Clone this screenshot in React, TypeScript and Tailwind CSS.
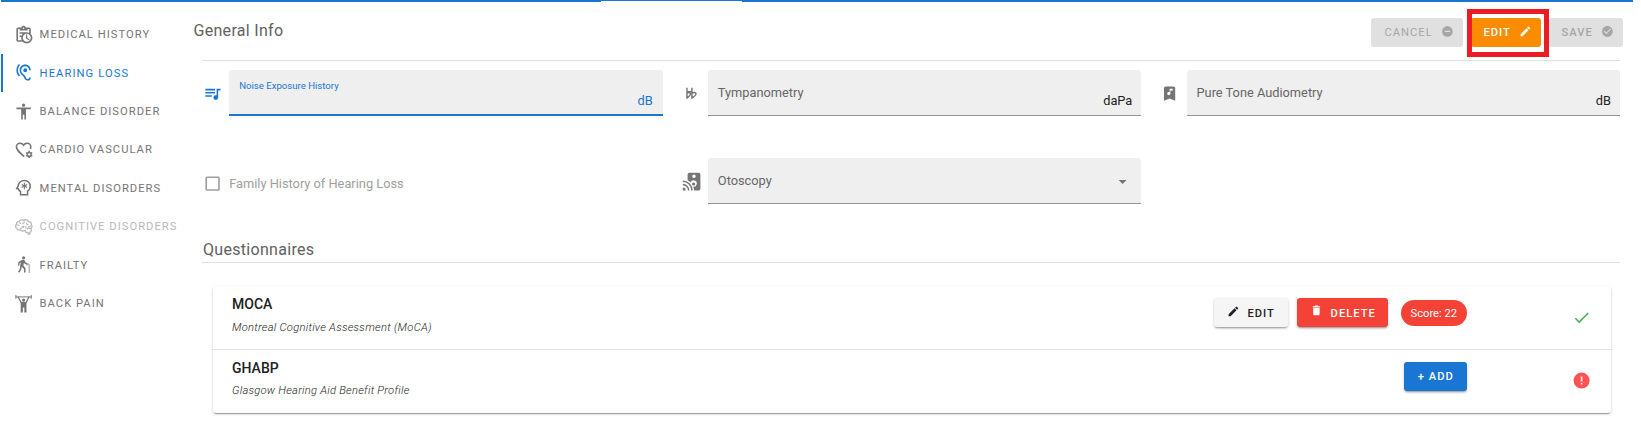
import React from 'react';

const icons = {
  clipboard:
    'M21 11.11V5C21 3.9 20.11 3 19 3H14.82C14.4 1.84 13.3 1 12 1S9.6 1.84 9.18 3H5C3.9 3 3 3.9 3 5V19C3 20.11 3.9 21 5 21H11.11C12.37 22.24 14.09 23 16 23C19.87 23 23 19.87 23 16C23 14.09 22.24 12.37 21 11.11M12 3C12.55 3 13 3.45 13 4S12.55 5 12 5 11 4.55 11 4 11.45 3 12 3M5 19V5H7V7H17V5H19V9.68C18.09 9.25 17.08 9 16 9H7V11H11.1C10.5 11.57 10.04 12.25 9.68 13H7V15H9.08C9.03 15.33 9 15.66 9 16C9 17.08 9.25 18.09 9.68 19H5M16 21C13.24 21 11 18.76 11 16S13.24 11 16 11 21 13.24 21 16 18.76 21 16 21M16.5 16.25L19.36 17.94L18.61 19.16L15 17V12H16.5V16.25Z',
  ear: 'M17,20C16.71,20 16.44,19.94 16.24,19.85C15.53,19.5 15.03,18.97 14.53,17.47C14,15.91 13.06,15.18 12.14,14.47C11.35,13.86 10.53,13.23 9.82,11.94C9.29,11 9,9.93 9,9C9,6.2 11.2,4 14,4C16.8,4 19,6.2 19,9H21C21,5.07 17.93,2 14,2C10.07,2 7,5.07 7,9C7,10.26 7.38,11.65 8.07,12.9C9,14.55 10.05,15.38 10.92,16.05C11.73,16.67 12.31,17.12 12.63,18.1C13.23,19.92 14,20.94 15.36,21.65C15.87,21.88 16.43,22 17,22A4,4 0 0,0 21,18H19A2,2 0 0,1 17,20M7.64,2.64L6.22,1.22C4.23,3.21 3,5.96 3,9C3,12.04 4.23,14.79 6.22,16.78L7.63,15.37C6,13.74 5,11.5 5,9C5,6.5 6,4.26 7.64,2.64M11.5,9A2.5,2.5 0 0,0 14,11.5A2.5,2.5 0 0,0 16.5,9A2.5,2.5 0 0,0 14,6.5A2.5,2.5 0 0,0 11.5,9Z',
  human: 'M12 2c1.1 0 2 .9 2 2s-.9 2-2 2-2-.9-2-2 .9-2 2-2zm9 7h-6v13h-2v-6h-2v6H9V9H3V7h18v2z',
  playlist:
    'M15,6H3V8H15V6M15,10H3V12H15V10M3,16H11V14H3V16M17,6V14.18C16.69,14.07 16.35,14 16,14A3,3 0 0,0 13,17A3,3 0 0,0 16,20A3,3 0 0,0 19,17V8H22V6H17Z',
  bookmark:
    'M17,3A2,2 0 0,1 19,5V21L12,18L5,21V5A2,2 0 0,1 7,3H17M11,14A2,2 0 0,0 13,12V8H16V6H12V10.27C11.71,10.1 11.36,10 11,10A2,2 0 0,0 9,12A2,2 0 0,0 11,14Z',
  pencil:
    'M20.71,7.04C21.1,6.65 21.1,6 20.71,5.63L18.37,3.29C18,2.9 17.35,2.9 16.96,3.29L15.12,5.12L18.87,8.87M3,17.25V21H6.75L17.81,9.93L14.06,6.18L3,17.25Z',
  minusCircle: 'M17,13H7V11H17M12,2A10,10 0 0,0 2,12A10,10 0 0,0 12,22A10,10 0 0,0 22,12A10,10 0 0,0 12,2Z',
  checkCircle:
    'M12 2C6.5 2 2 6.5 2 12S6.5 22 12 22 22 17.5 22 12 17.5 2 12 2M10 17L5 12L6.41 10.59L10 14.17L17.59 6.58L19 8L10 17Z',
  trash: 'M19,4H15.5L14.5,3H9.5L8.5,4H5V6H19M6,19A2,2 0 0,0 8,21H16A2,2 0 0,0 18,19V7H6V19Z',
  check: 'M21,7L9,19L3.5,13.5L4.91,12.09L9,16.17L19.59,5.59L21,7Z',
  alert: 'M13,13H11V7H13M13,17H11V15H13M12,2A10,10 0 0,0 2,12A10,10 0 0,0 12,22A10,10 0 0,0 22,12A10,10 0 0,0 12,2Z',
  menuDown: 'M7,10L12,15L17,10H7Z',
  checkbox: 'M19,3H5C3.89,3 3,3.89 3,5V19A2,2 0 0,0 5,21H19A2,2 0 0,0 21,19V5C21,3.89 20.1,3 19,3M19,5V19H5V5H19Z',
};

function Icon({ d, className = 'size-[19.2px]' }: { d: string; className?: string }) {
  return (
    <svg viewBox="0 0 24 24" fill="currentColor" fillRule="evenodd" className={`shrink-0 ${className}`}>
      <path d={d} />
    </svg>
  );
}

function Drawing({ children, className = 'size-[19.2px]' }: { children: React.ReactNode; className?: string }) {
  return (
    <svg viewBox="0 0 24 24" fill="none" stroke="currentColor" strokeWidth="2" className={`shrink-0 ${className}`}>
      {children}
    </svg>
  );
}

const HeartCog = () => (
  <Drawing>
    <path d="M13 19.7 12 20.1C6 14.7 3 12 3 8.5A4.5 4.5 0 0 1 7.5 4C9.3 4 11.1 4.9 12 6.4C12.9 4.9 14.7 4 16.5 4A4.5 4.5 0 0 1 21 8.5Q21 10 20.4 11.3" />
    <circle cx="19" cy="18" r="2.4" strokeWidth="1.8" />
    <path d="M19 13.6v2M19 20.4v2M15.2 15.8l1.7 1M21.1 19.2l1.7 1M22.8 15.8l-1.7 1M16.9 19.2l-1.7 1" strokeWidth="2" />
  </Drawing>
);

const HeadSnowflake = () => (
  <Drawing>
    <path d="M8.2 21V17.1C6.3 15.8 5.5 14.4 5.2 13.4L3.4 13 5.2 10.2C5.6 6.2 8.8 3 13 3A7.2 7.2 0 0 1 20.3 10C20.3 12.8 18.9 15.1 17 16.4V21H7.3" strokeWidth="1.9" />
    <path d="M13 6v8M9.5 8l7 4M16.5 8l-7 4" strokeWidth="1.4" />
  </Drawing>
);

const Brain = () => (
  <Drawing>
    <path
      d="M20.8 14.8c1.7-.9 2.2-3 1.1-4.8.1-2.4-1.5-4.1-3.7-4.2C16.8 3.4 14.4 3 12.5 4 9.6 3 7.4 3.6 6.3 5.5 4 5.7 3 7.6 3.2 9 1.3 10.4 1.5 13.3 3.6 14.2c.5 1.8 2.2 2.5 4 2.1 1.9 1.5 3.7 1.6 5.7.4M14 16.2c-.5 2 .7 3.4 2.4 3.3h1.2l.4 2h2l-.3-2.5c2.2-.3 2.7-2.8 1.1-4.2-1.7-1.3-3.8-.5-4.7.5"
      strokeWidth="1.6"
    />
    <path
      d="M12.5 4v3.2c0 1-1.2 1.3-2.2 1M7 6.3c0 1.5 1 2 2 1.8M3.3 10.5c1.4-.9 2.9-.5 3.4.7M7.5 16c0-1.8 1.2-2.8 3.3-2.6 1 0 1.5-.6 1.5-1.8M9.8 11.5H13M16 7.5c-.8 1.3.3 2.3 2 2M20.8 10.5c-.2 1.7-1.8 2.3-3.3 1.6M14.5 14.2c.8-1 .7-2 .4-3"
      strokeWidth="1.4"
    />
  </Drawing>
);

const WalkingCane = () => (
  <Drawing>
    <circle cx="12" cy="3.4" r="1.9" fill="currentColor" stroke="none" />
    <path
      d="M10.6 5.8h2.2l1.9 3.7 2.4 1.1-.7 1.5-3-1.3-1-1.2-.6 4 2.6 3V22h-1.9v-4.6l-2.9-2.7-.7 3.6L6.6 22.1 5 21l2.2-3.5L8.4 9.2 7 10.2 6.6 13.4 5 13.1l.5-4.2z"
      fill="currentColor"
      stroke="none"
    />
    <path d="M16.4 13v-.6c0-1.8 2.6-1.8 2.6 0V22.5" strokeWidth="1" />
  </Drawing>
);

const WeightLifter = () => (
  <Drawing>
    <path d="M2 3.6h20M2.4 1.2v4.8M21.6 1.2v4.8" strokeWidth="1.2" />
    <circle cx="12" cy="7.6" r="2" fill="currentColor" stroke="none" />
    <path d="M5 3.4 9 10.8h6l4-7.4" strokeWidth="1.6" />
    <path d="M8.4 10h7.2v13h-2.7v-6h-1.8v6H8.4z" fill="currentColor" stroke="none" />
  </Drawing>
);

const DoubleFlat = () => (
  <Drawing>
    <path
      d="M6.2 4.6v14M12.4 4.6v14M6 11.8c2-1.9 4.8-1.3 4.6.7-.2 1.9-2.4 3.6-4.4 5.1M12.4 11.8c2.4-1.9 5.4-1.3 5.1.7-.3 1.9-2.9 3.6-5.1 5.1M6 9.5h7"
      strokeWidth="1.8"
    />
  </Drawing>
);

const CastAudio = () => (
  <Drawing>
    <path
      fillRule="evenodd"
      d="M9 1H21A2 2 0 0 1 23 3V21A2 2 0 0 1 21 23H15.2A13.5 13.5 0 0 0 13.9 18.4A4 4 0 1 0 10.7 13.1A13 13 0 0 0 7 10.2V3A2 2 0 0 1 9 1ZM15 3A2.2 2.2 0 1 0 15 7.4A2.2 2.2 0 1 0 15 3Z"
      fill="currentColor"
      stroke="none"
    />
    <circle cx="14.5" cy="15" r="2" fill="currentColor" stroke="none" />
    <path d="M1 11.5A11.5 11.5 0 0 1 12.5 23M1 15.7A7.3 7.3 0 0 1 8.3 23" strokeWidth="1.8" />
    <path d="M1 19.5A3.5 3.5 0 0 1 4.5 23H1z" fill="currentColor" stroke="none" />
  </Drawing>
);

const navItems = [
  { label: 'MEDICAL HISTORY', icon: <Icon d={icons.clipboard} /> },
  { label: 'HEARING LOSS', icon: <Icon d={icons.ear} />, active: true },
  { label: 'BALANCE DISORDER', icon: <Icon d={icons.human} /> },
  { label: 'CARDIO VASCULAR', icon: <HeartCog /> },
  { label: 'MENTAL DISORDERS', icon: <HeadSnowflake /> },
  { label: 'COGNITIVE DISORDERS', icon: <Brain />, disabled: true },
  { label: 'FRAILTY', icon: <WalkingCane /> },
  { label: 'BACK PAIN', icon: <WeightLifter /> },
];

function Sidebar() {
  return (
    <nav className="w-[193px] shrink-0 pl-px pt-[13.2px]">
      {navItems.map((item) => (
        <div
          key={item.label}
          className={`flex h-[38.4px] items-center gap-[6px] border-l-2 pl-[11.4px] text-[11.2px] whitespace-nowrap ${
            item.active
              ? 'border-[#1976d2] tracking-[1.08px] text-[#1976d2]'
              : item.disabled
                ? 'border-transparent tracking-[1.03px] text-[#b9b9b9]'
                : 'border-transparent tracking-[1.03px] text-[#757575]'
          }`}
        >
          {item.icon}
          <span className="pt-[2.4px]">{item.label}</span>
        </div>
      ))}
    </nav>
  );
}

function Field({
  icon,
  label,
  suffix,
  focused,
  select,
}: {
  icon: React.ReactNode;
  label: string;
  suffix?: string;
  focused?: boolean;
  select?: boolean;
}) {
  return (
    <div className={`flex h-[46px] items-center gap-[7px] ${focused ? 'text-[#1976d2]' : 'text-[#757575]'}`}>
      <div className="pt-[2px]">{icon}</div>
      <div
        className={`flex h-full flex-1 justify-between rounded-t-[3px] bg-[#efefef] pl-[10px] pr-[9px] text-[12.8px] ${
          focused ? 'border-b-2 border-[#1976d2] pr-[10px]' : 'border-b border-[#949494]'
        }`}
      >
        <span className={focused ? 'pt-[9px] text-[9.6px] leading-[14px]' : 'pt-[13px] leading-5 text-[#666]'}>{label}</span>
        {suffix && <span className={`pt-[21px] leading-5 ${focused ? '' : 'text-[#222]'}`}>{suffix}</span>}
        {select && <Icon d={icons.menuDown} className="mt-[14px] size-[19.2px]" />}
      </div>
    </div>
  );
}

const buttonBase = 'flex h-[29px] items-center justify-center rounded-[3px] pt-[2px] text-[11.2px] tracking-[1px] font-medium';
const raised = 'shadow-[0_2px_2px_-1px_rgba(0,0,0,0.3),0_1px_3px_rgba(0,0,0,0.2)]';

export default function App() {
  return (
    <div className="flex h-[427px] w-[1641px] flex-col overflow-hidden bg-white font-['Roboto',sans-serif] text-[#212121]">
      <div className="ml-px flex h-[2px] w-[1632px] shrink-0 bg-[#1976d2]">
        <div className="ml-[600px] mt-px h-px w-[141px] bg-white" />
      </div>
      <div className="flex flex-1">
        <Sidebar />
        <main className="flex-1">
          <header className="flex h-[58px] w-[1430px] justify-between pt-4">
            <h1 className="pt-[1px] pl-[0.5px] text-[16px] leading-6 tracking-[0.3px] text-[#616161]">General Info</h1>
            <div className="flex gap-2">
              <button className={`${buttonBase} w-[92px] gap-[8px] bg-[#e0e0e0] pl-[4px] font-normal text-[#a6a6a6]`}>
                CANCEL
                <Icon d={icons.minusCircle} className="mb-[5px] size-[12.8px]" />
              </button>
              <div className="relative">
                <button className={`${buttonBase} w-[70px] gap-[8px] bg-[#fb8c00] pl-[3px] text-white`}>
                  EDIT
                  <Icon d={icons.pencil} className="mb-[5px] size-[12.8px]" />
                </button>
                <div className="absolute -left-1 -top-[9px] z-10 h-12 w-[82px] border-[5px] border-[#ed1c24]" />
              </div>
              <button className={`${buttonBase} w-[74px] gap-[8px] bg-[#e0e0e0] pl-[3px] text-[#a6a6a6]`}>
                SAVE
                <Icon d={icons.checkCircle} className="mb-[5px] size-[12.8px]" />
              </button>
            </div>
          </header>
          <section className="ml-[10px] w-[1417px]">
            <hr className="-ml-px border-[#e0e0e0]" />
            <div className="mt-[9px] grid grid-cols-3 gap-x-[19px] gap-y-[42px]">
              <Field icon={<Icon d={icons.playlist} />} label="Noise Exposure History" suffix="dB" focused />
              <Field icon={<DoubleFlat />} label="Tympanometry" suffix="daPa" />
              <Field icon={<Icon d={icons.bookmark} />} label="Pure Tone Audiometry" suffix="dB" />
              <div className="flex h-[52px] items-center gap-[7px] text-[12.8px] text-[#9e9e9e]">
                <Icon d={icons.checkbox} />
                <span>Family History of Hearing Loss</span>
              </div>
              <Field icon={<CastAudio />} label="Otoscopy" select />
            </div>
            <h2 className="mt-[28px] h-[24px] -ml-px pl-px text-[16px] leading-6 tracking-[0.3px] text-[#616161]">Questionnaires</h2>
            <hr className="-ml-px border-[#e0e0e0]" />
            <div className="ml-[10px] mt-[23px] w-[1398px] rounded-[3px] shadow-[0_2px_1px_-1px_rgba(0,0,0,0.3),0_1px_3px_rgba(0,0,0,0.2)]">
              <div className="flex h-16 justify-between border-b border-[#e0e0e0] pl-[19px] pr-[20px]">
                <div className="pt-2">
                  <h3 className="text-[14px] leading-5 font-medium">MOCA</h3>
                  <p className="mt-[4px] text-[11.2px] leading-5 font-light tracking-[0.27px] italic">Montreal Cognitive Assessment (MoCA)</p>
                </div>
                <div className="flex pt-3">
                  <button className={`${buttonBase} ${raised} w-[74px] gap-[8px] bg-[#f5f5f5] pt-[3px] text-[#212121]`}>
                    <Icon d={icons.pencil} className="mb-[6px] size-[12.8px]" />
                    EDIT
                  </button>
                  <button className={`${buttonBase} ${raised} ml-[9px] w-[91px] gap-[8px] bg-[#f44336] pl-px text-white`}>
                    <Icon d={icons.trash} className="mb-[6px] size-[12.8px]" />
                    <span className="pt-px">DELETE</span>
                  </button>
                  <span className="ml-[13px] mt-[2px] flex h-[26px] w-[66px] items-center justify-center rounded-full bg-[#f44336] pt-[2px] text-[11.2px] text-white">
                    Score: 22
                  </span>
                  <Icon d={icons.check} className="ml-[105px] mt-[10px] size-[19.2px] text-[#4caf50]" />
                </div>
              </div>
              <div className="flex h-[63px] justify-between pl-[19px] pr-[20px]">
                <div className="pt-2">
                  <h3 className="text-[14px] leading-5 font-medium">GHABP</h3>
                  <p className="mt-[3px] text-[11.2px] leading-5 font-light tracking-[0.26px] italic">Glasgow Hearing Aid Benefit Profile</p>
                </div>
                <div className="flex pt-3">
                  <button className={`${buttonBase} ${raised} w-[63px] bg-[#1976d2] pl-px text-white`}>+ ADD</button>
                  <Icon d={icons.alert} className="ml-[105px] mt-[9px] size-[19.2px] text-[#ff5252]" />
                </div>
              </div>
            </div>
          </section>
        </main>
      </div>
    </div>
  );
}
